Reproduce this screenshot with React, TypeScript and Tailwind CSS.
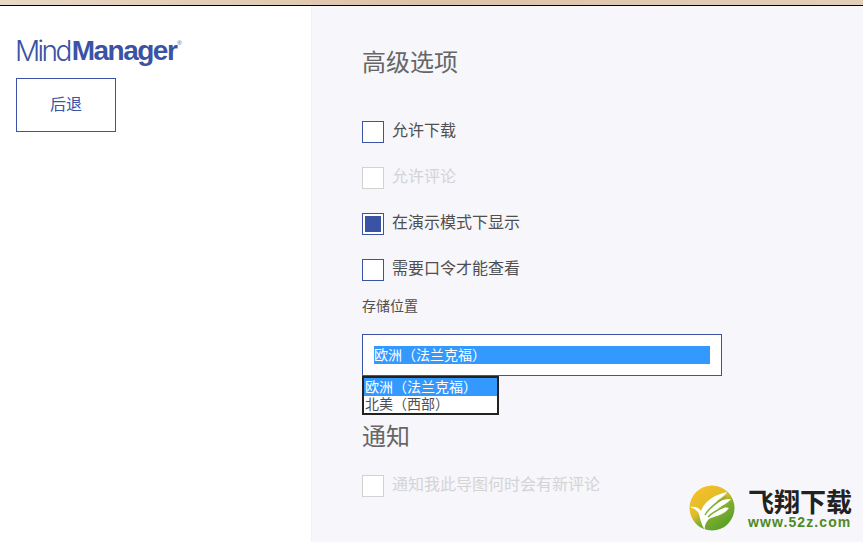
const cjk = "font-['Liberation_Sans','Noto_Sans_CJK_SC',sans-serif]";

function Check({ label, state }: { label: string; state?: "on" | "disabled" }) {
  const disabled = state === "disabled";
  return (
    <div className="flex items-start gap-2 h-[22px]">
      <div
        className={
          "w-[22px] h-[22px] border bg-white flex items-center justify-center " +
          (disabled ? "border-[#d2d2d2]" : "border-[#3a53a4]")
        }
      >
        {state === "on" && <div className="w-4 h-4 bg-[#3a53a4]" />}
      </div>
      <span className={"text-base leading-5 " + (disabled ? "text-[#d4d4d6]" : "text-[#4f4f4f]")}>{label}</span>
    </div>
  );
}

function Leaf() {
  return (
    <svg width="46" height="46" viewBox="0 0 46 46">
      <defs>
        <linearGradient id="g" x1="0.15" y1="0" x2="0.85" y2="1">
          <stop offset="0" stopColor="#fbbf25" />
          <stop offset="0.42" stopColor="#e0bd2a" />
          <stop offset="0.62" stopColor="#7fae2e" />
          <stop offset="1" stopColor="#4f9a2a" />
        </linearGradient>
      </defs>
      <circle cx="23" cy="23" r="22.5" fill="url(#g)" />
      <path d="M1 22 C7 21 10 23 12 26 C16 15 28 9 38 7 C36 11 31 13 27 17 C32 15 37 14 42 14 C38 19 32 21 28 24 C32 22 36 22 40 23 C34 31 25 31 20 34 C17 37 15 41 16 45 C11 38 11 30 9 27 C7 25 4 23 1 22 Z" fill="#fff" />
      <path d="M16 30 C20 23 28 17 37 12 M19 32 C24 27 30 24 37 21" stroke="#7cb02e" strokeWidth="1.5" fill="none" />
    </svg>
  );
}

export default function App() {
  return (
    <div className={"relative w-[863px] h-[542px] overflow-hidden bg-white flex flex-col " + cjk}>
      <div className="h-[5px] shrink-0 bg-gradient-to-r from-[#e8d8c6] via-[#dcc3a8] to-[#e2cfba]" />
      <div className="h-px shrink-0 bg-black" />
      <div className="flex flex-1 min-h-0">
        <aside className="w-[311px] shrink-0 bg-white pl-4 pt-[28px]">
          <div className="h-[33px] -ml-px flex items-center text-[28px] text-[#3a53a4] tracking-[-1.5px] leading-none">
            <span className="font-['Inter',sans-serif] font-light tracking-[-2.6px]">Mind</span>
            <span className="ml-[2px] font-['Liberation_Sans',sans-serif] font-bold">Manager</span>
            <span className="text-[6px] self-start mt-[6px] ml-[1px] tracking-normal">®</span>
          </div>
          <div className="mt-[11px] w-[100px] h-[54px] border border-[#3a53a4] flex items-center justify-center text-base text-[#3a53a4]">
            后退
          </div>
        </aside>
        <main className="flex-1 bg-[#f6f6fb] border-l border-[#f0f0f6] pl-[50px] pt-[41px] relative">
          <h1 className="text-2xl leading-8 text-[#666666] font-normal">高级选项</h1>
          <div className="mt-[42px] flex flex-col gap-6">
            <Check label="允许下载" />
            <Check label="允许评论" state="disabled" />
            <Check label="在演示模式下显示" state="on" />
            <Check label="需要口令才能查看" />
          </div>
          <div className="mt-[15px] text-sm leading-5 text-[#4f4f4f]">存储位置</div>
          <div className="relative mt-[18px] w-[360px]">
            <div className="h-[42px] border border-[#3a53a4] bg-white px-[11px] flex items-center">
              <div className="w-full h-[18px] bg-[#3399ff] text-white text-sm leading-[18px]">欧洲（法兰克福）</div>
            </div>
            <div className="absolute left-0 top-[42px] w-[137px] h-[39px] border-2 border-[#222222] bg-white text-sm">
              <div className="h-[18px] leading-[18px] bg-[#3399ff] text-white pl-px">欧洲（法兰克福）</div>
              <div className="h-[17px] leading-[17px] text-[#4f4f4f] pl-px">北美（西部）</div>
            </div>
          </div>
          <h2 className="mt-[45px] text-2xl leading-8 text-[#666666] font-normal">通知</h2>
          <div className="mt-[22px]">
            <Check label="通知我此导图何时会有新评论" state="disabled" />
          </div>
        </main>
      </div>
      <div className="absolute left-[689px] top-[485px] flex items-start gap-[13px]">
        <Leaf />
        <div className="flex flex-col items-start w-[104px] pt-[3px]">
          <span className="h-[25px] text-[26px] leading-[25px] font-bold text-[#222222] font-['Noto_Sans_CJK_SC',sans-serif]">飞翔下载</span>
          <span className="mt-px h-[16px] text-[14px] leading-[16px] font-bold text-[#4f8a1f] tracking-[1.1px] font-['Liberation_Sans',sans-serif]">www.52z.com</span>
        </div>
      </div>
    </div>
  );
}
